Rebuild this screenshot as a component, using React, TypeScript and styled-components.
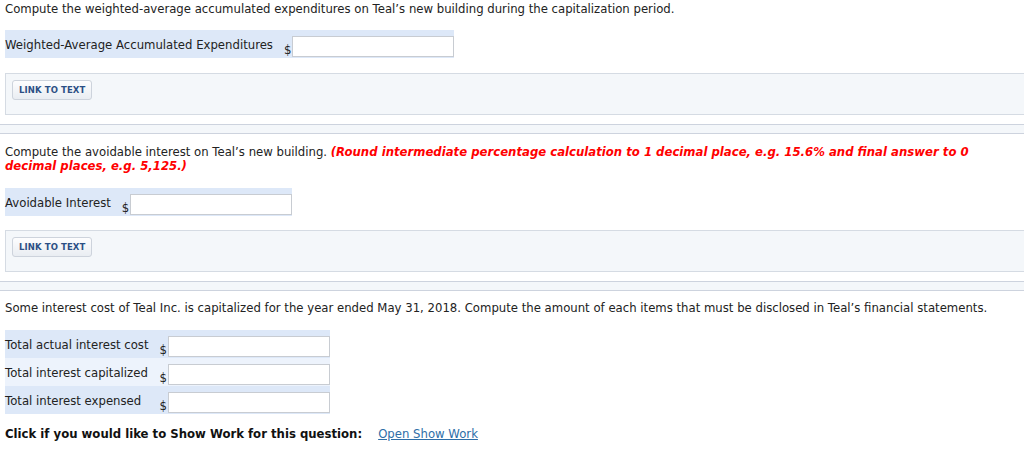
import React from 'react';
import styled, { createGlobalStyle } from 'styled-components';

const GlobalStyle = createGlobalStyle`
  body {
    margin: 0;
    background: #fff;
    font-family: "DejaVu Sans", Verdana, sans-serif;
    font-size: 11.7px;
    color: #222;
  }
`;

const Page = styled.div`
  padding-top: 2px;
`;

const Section = styled.div`
  padding: 0 0 0 5px;
`;

const Prompt = styled.p<{ $top: number }>`
  margin: ${(p) => p.$top}px 0 0;
  padding-right: 20px;
  line-height: 14px;
`;

const Hint = styled.span`
  color: #ff0000;
  font-weight: bold;
  font-style: italic;
`;

const Table = styled.div<{ $top: number }>`
  display: inline-grid;
  grid-template-columns: auto auto auto;
  margin-top: ${(p) => p.$top}px;
`;

const Row = styled.div<{ $alt?: boolean }>`
  display: contents;
  & > * {
    background: ${(p) => (p.$alt ? '#edf3fc' : '#dde8f8')};
    height: 28px;
  }
`;

const Label = styled.div`
  display: flex;
  align-items: center;
  padding-right: 11px;
  padding-top: 1px;
  box-sizing: border-box;
  white-space: nowrap;
`;

const Dollar = styled.div`
  display: flex;
  align-items: flex-end;
  padding-bottom: 1px;
  box-sizing: border-box;
  width: 8px;
`;

const InputCell = styled.div`
  display: flex;
  align-items: flex-end;
  padding-bottom: 1px;
  box-sizing: border-box;
`;

const Field = styled.input`
  width: 162px;
  height: 21px;
  box-sizing: border-box;
  border: 1px solid #c8ccd2;
  background: #fff;
  margin: 0;
  padding: 0 3px;
  font: inherit;
`;

const LinkBox = styled.div<{ $top: number }>`
  margin-top: ${(p) => p.$top}px;
  height: 42px;
  box-sizing: border-box;
  background: #f4f7fa;
  border: 1px solid #d5dbe3;
  border-right: none;
  padding: 6px 0 0 6px;
`;

const LinkButton = styled.button`
  height: 20px;
  padding: 0 6px;
  border: 1px solid #cdd3dc;
  border-radius: 3px;
  background: linear-gradient(#fdfdfe, #e9edf2);
  color: #2c4f85;
  font-family: "DejaVu Sans", Verdana, sans-serif;
  font-size: 8.5px;
  font-weight: bold;
  letter-spacing: 0.1px;
  cursor: pointer;
`;

const Divider = styled.div`
  margin-top: 9px;
  height: 10px;
  box-sizing: border-box;
  background: #f4f7fa;
  border-top: 1px solid #cdd3de;
  border-bottom: 1px solid #cdd3de;
`;

const Footer = styled.div`
  margin-top: 13px;
  display: flex;
  gap: 16px;
  line-height: 14px;
`;

const Strong = styled.span`
  font-weight: bold;
  color: #111;
`;

const ShowWork = styled.a`
  color: #2e6ea8;
  text-decoration: underline;
  cursor: pointer;
`;

type Entry = { label: string };

const AmountTable: React.FC<{ rows: Entry[]; top: number }> = ({ rows, top }) => (
  <Table $top={top}>
    {rows.map((r, i) => (
      <Row key={r.label} $alt={i % 2 === 1}>
        <Label>{r.label}</Label>
        <Dollar>$</Dollar>
        <InputCell>
          <Field type="text" />
        </InputCell>
      </Row>
    ))}
  </Table>
);

const App: React.FC = () => {
  return (
    <Page>
      <GlobalStyle />
      <Section>
        <Prompt $top={0}>
          Compute the weighted-average accumulated expenditures on Teal’s new building during the
          capitalization period.
        </Prompt>
        <AmountTable top={14} rows={[{ label: 'Weighted-Average Accumulated Expenditures' }]} />
        <LinkBox $top={15}>
          <LinkButton>LINK TO TEXT</LinkButton>
        </LinkBox>
      </Section>
      <Divider />
      <Section>
        <Prompt $top={11}>
          Compute the avoidable interest on Teal’s new building.{' '}
          <Hint>
            (Round intermediate percentage calculation to 1 decimal place, e.g. 15.6% and final
            answer to 0 decimal places, e.g. 5,125.)
          </Hint>
        </Prompt>
        <AmountTable top={15} rows={[{ label: 'Avoidable Interest' }]} />
        <LinkBox $top={14}>
          <LinkButton>LINK TO TEXT</LinkButton>
        </LinkBox>
      </Section>
      <Divider />
      <Section>
        <Prompt $top={10}>
          Some interest cost of Teal Inc. is capitalized for the year ended May 31, 2018. Compute
          the amount of each items that must be disclosed in Teal’s financial statements.
        </Prompt>
        <AmountTable
          top={15}
          rows={[
            { label: 'Total actual interest cost' },
            { label: 'Total interest capitalized' },
            { label: 'Total interest expensed' },
          ]}
        />
        <Footer>
          <Strong>Click if you would like to Show Work for this question:</Strong>
          <ShowWork>Open Show Work</ShowWork>
        </Footer>
      </Section>
    </Page>
  );
};

export default App;
